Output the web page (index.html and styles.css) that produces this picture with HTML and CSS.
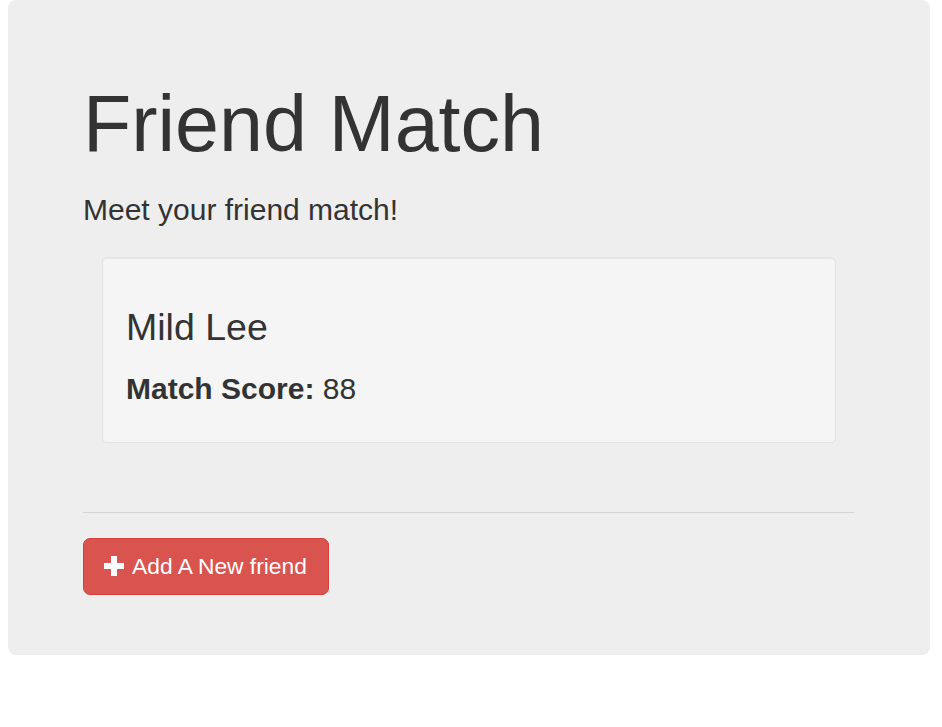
FILE: index.html
```html
<!DOCTYPE html>
<html>
<head>
<meta charset="utf-8">
<link rel="stylesheet" href="styles.css">
</head>
<body>
<div class="jumbotron">
  <h1 class="title">Friend Match</h1>
  <p class="lead">Meet your friend match!</p>
  <div class="well">
    <h3 class="name">Mild Lee</h3>
    <p class="score"><strong>Match Score:</strong> 88</p>
  </div>
  <hr class="divider">
  <button class="btn-add" type="button">
    <svg class="plus" width="20" height="20" viewBox="0 0 20 20" aria-hidden="true"><path d="M7 0h6v7h7v6h-7v7H7v-7H0V7h7z" fill="#fff"/></svg>
    <span>Add A New friend</span>
  </button>
</div>
</body>
</html>
```
FILE: styles.css
```css
html, body {
  margin: 0;
  padding: 0;
  background: #fff;
}
body {
  font-family: "Liberation Sans", Arial, Helvetica, sans-serif;
  color: #333;
}
.jumbotron {
  margin: 0 12px 0 8px;
  background: #eee;
  border-radius: 8px;
  padding: 81px 76px 0 75px;
  height: 574px;
}
.title {
  margin: 0;
  font-size: 79px;
  font-weight: 400;
  line-height: 1.1;
  color: #333;
}
.lead {
  margin: 21px 0 0;
  font-size: 30px;
  line-height: 42px;
  font-weight: 400;
}
.well {
  margin: 26px 18px 0 19px;
  background: #f5f5f5;
  border: 1px solid #e3e3e3;
  border-radius: 5px;
  box-shadow: inset 0 1px 1px rgba(0,0,0,.05);
  padding: 49px 23px 0 23px;
  height: 135px;
}
.name {
  margin: 0;
  font-size: 37.5px;
  line-height: 41px;
  font-weight: 400;
}
.score {
  margin: 19px 0 0;
  font-size: 30px;
  line-height: 43px;
}
.score strong {
  font-weight: 700;
}
.divider {
  margin: 69px 0 0;
  border: 0;
  border-top: 1px solid #d5d5d5;
  height: 0;
}
.btn-add {
  margin-top: 25px;
  display: inline-flex;
  align-items: center;
  gap: 8px;
  height: 57px;
  padding: 0 21px 0 20px;
  background: #d9534f;
  border: 1px solid #d43f3a;
  border-radius: 7px;
  color: #fff;
  font-family: "Liberation Sans", Arial, Helvetica, sans-serif;
  font-size: 22.8px;
  line-height: 30px;
  cursor: pointer;
}
.plus {
  display: block;
  flex: none;
}
```
